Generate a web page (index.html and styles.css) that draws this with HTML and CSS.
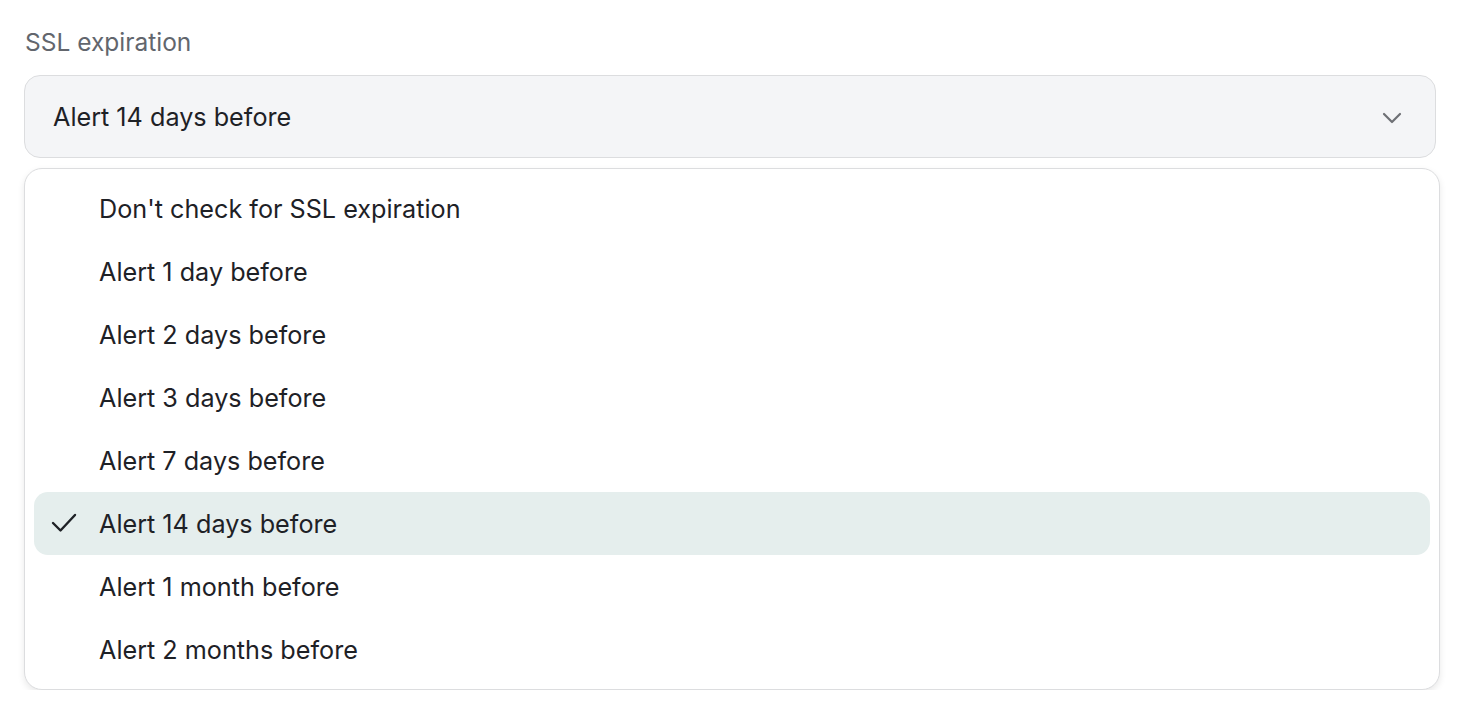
FILE: index.html
```html
<!DOCTYPE html>
<html lang="en">
<head>
    <meta charset="UTF-8">
    <title>SSL expiration</title>
    <link rel="stylesheet" href="styles.css">
</head>
<body>

<div class="field">
    <label class="field-label">SSL expiration</label>

    <div class="select">
        <span>Alert 14 days before</span>
        <svg class="chevron" width="20" height="12" viewBox="0 0 20 12">
            <path d="M2 2 L10 10 L18 2" fill="none" stroke="#6e7075" stroke-width="2.2" stroke-linecap="round" stroke-linejoin="round"/>
        </svg>
    </div>

    <div class="menu">
        <div class="option">Don't check for SSL expiration</div>
        <div class="option">Alert 1 day before</div>
        <div class="option">Alert 2 days before</div>
        <div class="option">Alert 3 days before</div>
        <div class="option">Alert 7 days before</div>
        <div class="option selected">
            <svg class="check" width="26" height="20" viewBox="0 0 26 20">
                <path d="M2 10 L9.5 17.5 L24 2" fill="none" stroke="#1e2126" stroke-width="2.4" stroke-linecap="round" stroke-linejoin="round"/>
            </svg>
            Alert 14 days before
        </div>
        <div class="option">Alert 1 month before</div>
        <div class="option">Alert 2 months before</div>
    </div>
</div>

</body>
</html>
```

FILE: styles.css
```css
body {
    font-family: Inter, "Noto Sans", sans-serif;
    background-color: #fff;
    color: #1e2126;
    margin: 0;
    padding: 0;
}
.field {
    width: 1416px;
    padding: 27px 0 0 24px;
}
.field-label {
    display: block;
    font-size: 24.5px;
    color: #62666d;
    line-height: 30px;
    margin-bottom: 18px;
    padding-left: 1px;
}
.select {
    width: 1412px;
    height: 83px;
    box-sizing: border-box;
    display: flex;
    align-items: center;
    justify-content: space-between;
    padding: 1px 33px 0 28px;
    background-color: #f4f5f7;
    border: 1.5px solid #dcdddf;
    border-radius: 16px;
    font-size: 25.2px;
}
.chevron {
    margin-top: 1px;
}
.menu {
    margin-top: 10px;
    width: 1416px;
    box-sizing: border-box;
    padding: 8px 9px;
    border: 1.5px solid #dcdddf;
    border-radius: 18px;
    background-color: #fff;
    box-shadow: 0 3px 7px rgba(0, 0, 0, 0.09);
}
.option {
    position: relative;
    height: 63px;
    display: flex;
    align-items: center;
    padding-left: 65px;
    padding-top: 1px;
    box-sizing: border-box;
    font-size: 25.2px;
    border-radius: 14px;
}
.selected {
    background-color: #e5eeed;
}
.check {
    position: absolute;
    left: 17px;
    top: 21px;
}
```
